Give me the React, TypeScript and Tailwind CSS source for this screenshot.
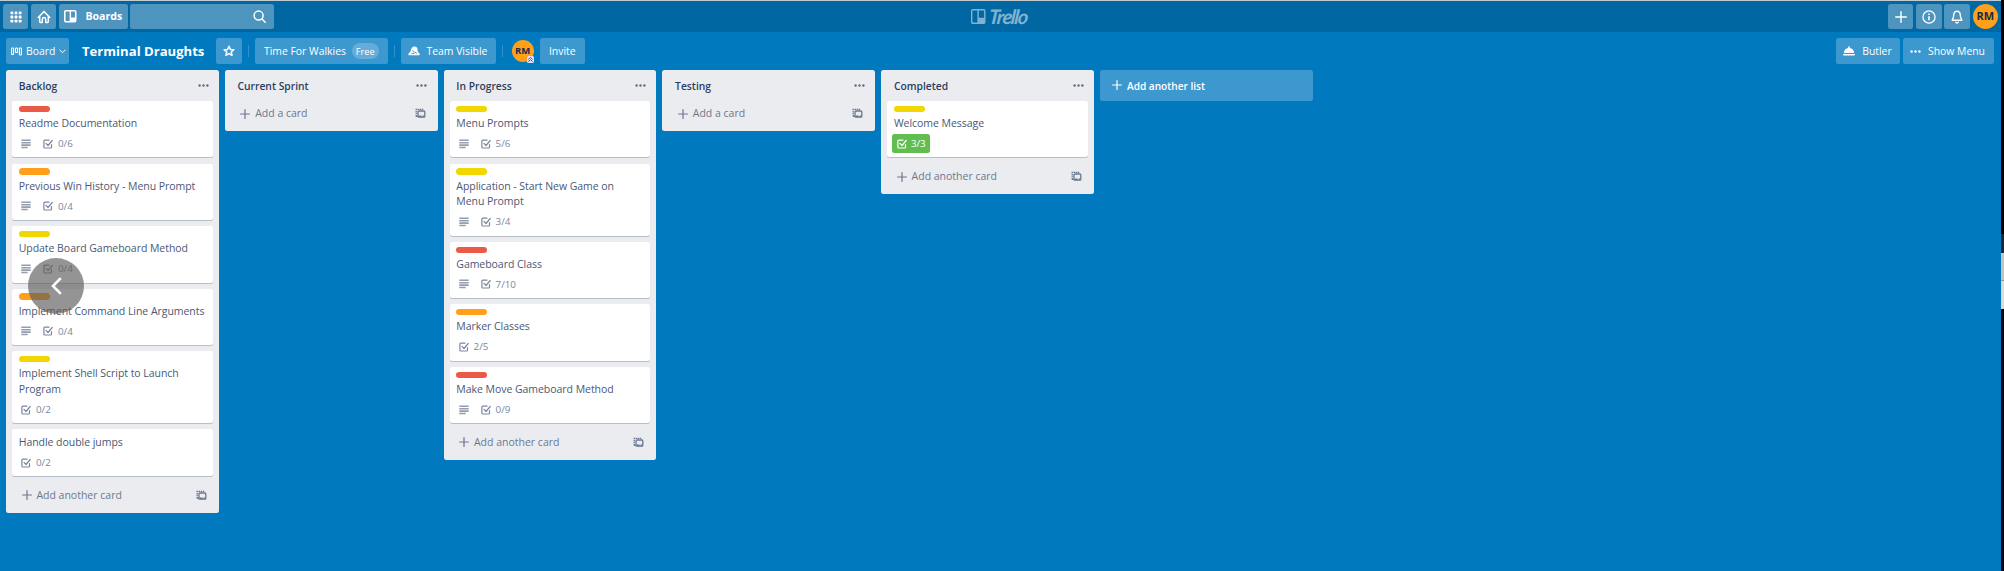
import type { ReactNode } from "react";

type Card = { title: string; label?: string; desc?: boolean; check: string; done?: boolean };
type List = { name: string; cards: Card[] };

const RED = "bg-[#eb5a46]";
const ORANGE = "bg-[#ff9f1a]";
const YELLOW = "bg-[#f2d600]";

const lists: List[] = [
  {
    name: "Backlog",
    cards: [
      { title: "Readme Documentation", label: RED, desc: true, check: "0/6" },
      { title: "Previous Win History - Menu Prompt", label: ORANGE, desc: true, check: "0/4" },
      { title: "Update Board Gameboard Method", label: YELLOW, desc: true, check: "0/4" },
      { title: "Implement Command Line Arguments", label: ORANGE, desc: true, check: "0/4" },
      { title: "Implement Shell Script to Launch Program", label: YELLOW, check: "0/2" },
      { title: "Handle double jumps", check: "0/2" },
    ],
  },
  { name: "Current Sprint", cards: [] },
  {
    name: "In Progress",
    cards: [
      { title: "Menu Prompts", label: YELLOW, desc: true, check: "5/6" },
      { title: "Application - Start New Game on Menu Prompt", label: YELLOW, desc: true, check: "3/4" },
      { title: "Gameboard Class", label: RED, desc: true, check: "7/10" },
      { title: "Marker Classes", label: ORANGE, check: "2/5" },
      { title: "Make Move Gameboard Method", label: RED, desc: true, check: "0/9" },
    ],
  },
  { name: "Testing", cards: [] },
  { name: "Completed", cards: [{ title: "Welcome Message", label: YELLOW, check: "3/3", done: true }] },
];

function Dots({ className }: { className: string }) {
  return (
    <svg className={className} viewBox="0 0 11 3" fill="currentColor">
      <circle cx="1.6" cy="1.5" r="1.2" />
      <circle cx="5.5" cy="1.5" r="1.2" />
      <circle cx="9.4" cy="1.5" r="1.2" />
    </svg>
  );
}

function Plus({ className }: { className: string }) {
  return (
    <svg className={className} viewBox="0 0 10 10" stroke="currentColor" strokeWidth="1.2" strokeLinecap="round">
      <path d="M5 .6v8.8M.6 5h8.8" />
    </svg>
  );
}

function CheckIcon() {
  return (
    <svg className="size-[10px] shrink-0" viewBox="0 0 10 10" fill="none" stroke="currentColor" strokeWidth="1.2" strokeLinecap="round" strokeLinejoin="round">
      <path d="M6 1.2H1.7a.8.8 0 0 0-.8.8v6.2c0 .4.4.8.8.8h6a.8.8 0 0 0 .8-.8V5.6" />
      <path d="M3 4.4l2 2.1 4.2-5" />
    </svg>
  );
}

function DescIcon() {
  return (
    <svg className="size-[10px] shrink-0" viewBox="0 0 10 10" stroke="currentColor" strokeWidth="1.6">
      <path d="M.3 1.3h9.4M.3 3.7h9.4M.3 6.1h9.4M.3 8.5h6.4" />
    </svg>
  );
}

function TemplateIcon() {
  return (
    <svg className="size-[11px]" viewBox="0 0 11 11" fill="none" stroke="currentColor" strokeWidth="1.3">
      <path d="M1.200 8.400V1.300h7.200" strokeDasharray="1.500 .6" />
      <path d="M1 8.400h1.800" />
      <rect x="3" y="3" width="6.800" height="6.200" rx=".9" />
      <path d="M3.600 8.400h3M7.600 8.400h1.800" strokeWidth="1.800" />
    </svg>
  );
}

function CardView({ card }: { card: Card }) {
  return (
    <div className="mb-[6.2px] rounded-[2.5px] bg-white px-[6.5px] pb-[6.25px] pt-[4.7px] shadow-[0_1px_0_rgba(9,30,66,0.22)]">
      {card.label && <div className={"mb-[3.2px] h-[6.3px] w-[31.2px] rounded-full " + card.label} />}
      <div className="mb-[4.5px] pt-[0.7px] text-[10.5px] leading-[15.65px] tracking-[-0.04px] text-[#4a5874]">{card.title}</div>
      <div className={"flex h-[15.1px] items-center text-[#7b879b] " + (card.done ? "-ml-[1.500px]" : "pl-[2.8px]")}>
        {card.desc && (
          <div className="mr-[12px] flex opacity-80">
            <DescIcon />
          </div>
        )}
        <div
          className={
            card.done
              ? "-my-[1.500px] flex h-[18.500px] items-center gap-[4px] rounded-[2.5px] bg-[#61bd4f] px-[4.500px] text-white"
              : "flex items-center gap-[4.500px]"
          }
        >
          <CheckIcon />
          <span className="text-[9.8px] leading-[15px]">{card.check}</span>
        </div>
      </div>
    </div>
  );
}

function ListView({ list }: { list: List }) {
  return (
    <section className="w-[212.8px] shrink-0 rounded-[2.5px] bg-[#ebecf0] px-[6.2px]">
      <header className="flex h-[31.6px] items-center justify-between pl-[6.5px] pr-[4px]">
        <h2 className="pt-[0.500px] text-[10.3px] font-semibold leading-[16px] text-[#2c3e5d]">{list.name}</h2>
        <Dots className="h-[3px] w-[11px] text-[#5e6c84]" />
      </header>
      {list.cards.map((c) => (
        <CardView key={c.title} card={c} />
      ))}
      <div className="mb-[5.2px] flex h-[25px] items-center pl-[9.4px] pr-[5.8px] pt-[0.8px] text-[#6b778f]">
        <Plus className="size-[10px]" />
        <span className="ml-[4.8px] flex-1 text-[10.5px]">{list.cards.length ? "Add another card" : "Add a card"}</span>
        <TemplateIcon />
      </div>
    </section>
  );
}

function TopButton({ className = "w-[25.2px]", children }: { className?: string; children: ReactNode }) {
  return (
    <div className={"flex h-[25px] shrink-0 items-center justify-center rounded-[2.5px] bg-[#4d94bf] text-white " + className}>{children}</div>
  );
}

function BoardButton({ className, children }: { className: string; children: ReactNode }) {
  return (
    <div className={"flex h-[25.4px] shrink-0 items-center rounded-[2.5px] bg-[#3d98d0] pt-[1px] text-[10.4px] font-medium text-white " + className}>{children}</div>
  );
}

const Divider = () => <div className="h-[12.5px] w-px shrink-0 bg-[#3391ca]" />;

export default function App() {
  return (
    <div className="relative flex h-[571px] w-[2004px] overflow-hidden bg-[#0079bf] font-['Open_Sans','Noto_Sans',sans-serif]">
      <div className="flex min-w-0 flex-1 flex-col">
        <div className="h-px shrink-0 bg-[#c3ccd3]" />
        <nav className="flex h-[31px] shrink-0 items-center bg-[#0067a3] pl-[3px] pr-[2.500px]">
          <div className="flex w-[900px] items-center gap-[2.9px]">
            <TopButton>
              <svg className="size-[12px]" viewBox="0 0 12 12" fill="currentColor">
                {[0.5, 4.6, 8.7].map((y) => [0.5, 4.6, 8.7].map((x) => <rect key={x + "-" + y} x={x} y={y} width="2.8" height="2.8" rx=".6" />))}
              </svg>
            </TopButton>
            <TopButton>
              <svg className="size-[14px]" viewBox="0 0 14 14" fill="none" stroke="currentColor" strokeWidth="1.5" strokeLinecap="round" strokeLinejoin="round">
                <path d="M1.2 7.4L7 1.4l5.8 6M2.7 6.4v5.2c0 .5.3.8.8.8h1.8V9.2a1.7 1.7 0 0 1 3.4 0v3.2h1.8c.5 0 .8-.3.8-.8V6.4" />
              </svg>
            </TopButton>
            <TopButton className="w-[68.4px] gap-[8.500px]">
              <svg className="size-[12.5px]" viewBox="0 0 12 12">
                <rect x=".75" y=".75" width="10.5" height="10.5" rx="1" fill="none" stroke="currentColor" strokeWidth="1.5" />
                <path d="M5.4 1h1.400v10H5.400z" fill="currentColor" />
                <path d="M6.4 7.2h4.8v4H6.4z" fill="currentColor" />
              </svg>
              <span className="text-[10.6px] font-bold">Boards</span>
            </TopButton>
            <TopButton className="w-[144px] pl-[115px]">
              <svg className="size-[13px]" viewBox="0 0 13 13" fill="none" stroke="currentColor" strokeWidth="1.5" strokeLinecap="round">
                <circle cx="5.6" cy="5.6" r="4.5" />
                <path d="M9 9l3.2 3.2" />
              </svg>
            </TopButton>
          </div>
          <div className="ml-[68px] flex items-center gap-[3px] text-[#80b3d2]">
            <svg className="h-[15px] w-[14.5px]" viewBox="0 0 14.5 15">
              <rect x=".7" y=".7" width="13.1" height="13.6" rx="1" fill="none" stroke="currentColor" strokeWidth="1.4" />
              <path d="M6.4 1h1.4v7.800h6v5.5H6.4z" fill="currentColor" />
            </svg>
            <span className="-skew-x-6 pb-[1px] font-['Lato',sans-serif] text-[20px] font-bold italic leading-[20px] tracking-[-1.300px]">Trello</span>
          </div>
          <div className="ml-auto flex items-center gap-[2.9px]">
            <TopButton>
              <Plus className="size-[12px]" />
            </TopButton>
            <TopButton>
              <svg className="size-[14px]" viewBox="0 0 14 14" fill="none" stroke="currentColor" strokeWidth="1.3">
                <circle cx="7" cy="7" r="6.1" />
                <path d="M7 6.2v4M7 3.6v1.4" strokeWidth="1.6" />
              </svg>
            </TopButton>
            <TopButton>
              <svg className="h-[14px] w-[12px]" viewBox="0 0 12 14" fill="none" stroke="currentColor" strokeWidth="1.4" strokeLinejoin="round" strokeLinecap="round">
                <path d="M6 1.2c-2 0-3.2 1.5-3.2 3.4 0 2.7-.5 3.6-1.6 5.6h9.6c-1.1-2-1.6-2.9-1.6-5.6C9.200 2.700 8 1.200 6 1.200z" />
                <path d="M4.800 12.200c.5 1 1.900 1 2.400 0" />
              </svg>
            </TopButton>
            <div className="flex size-[25.500px] items-center justify-center rounded-full bg-[#ff9f1a] text-[11px] font-bold text-[#172b4d]">RM</div>
          </div>
        </nav>

        <div className="flex h-[37.500px] shrink-0 items-center pl-[6px] pr-[6.500px] pt-[0.500px]">
          <BoardButton className="w-[63px] pl-[5px]">
            <svg className="h-[9px] w-[11px]" viewBox="0 0 11 9" fill="none" stroke="currentColor" strokeWidth="1.100">
              <rect x=".6" y="1" width="2" height="6.500" rx=".6" />
              <rect x="4.500" y="1" width="2" height="4.500" rx=".6" />
              <rect x="8.400" y="1" width="2" height="7" rx=".6" />
            </svg>
            <span className="ml-[4px]">Board</span>
            <svg className="ml-[3.500px] h-[5px] w-[7px]" viewBox="0 0 7 5" fill="none" stroke="currentColor" strokeLinecap="round">
              <path d="M.8 1l2.700 2.700L6.200 1" />
            </svg>
          </BoardButton>
          <h1 className="ml-[13px] w-[134px] whitespace-nowrap pt-[1px] text-[13.100px] font-bold text-white">Terminal Draughts</h1>
          <BoardButton className="w-[25.500px] justify-center">
            <svg className="size-[12px]" viewBox="0 0 12 12" fill="none" stroke="currentColor" strokeWidth="1.500" strokeLinejoin="round">
              <path d="M6 1.200l1.400 3.200 3.500.3-2.650 2.300.8 3.400L6 8.600l-3.050 1.800.8-3.400L1.100 4.700l3.500-.3z" />
            </svg>
          </BoardButton>
          <div className="flex w-[13.500px] justify-center">
            <Divider />
          </div>
          <BoardButton className="w-[132.500px] pl-[9px]">
            <span className="w-[82px] whitespace-nowrap">Time For Walkies</span>
            <span className="ml-[6px] flex h-[16px] w-[26.500px] items-center justify-center rounded-full bg-[#64acd9] text-[9.200px]">Free</span>
          </BoardButton>
          <div className="flex w-[13.500px] justify-center">
            <Divider />
          </div>
          <BoardButton className="w-[94.500px] pl-[7px]">
            <svg className="h-[10px] w-[12px]" viewBox="0 0 12 10">
              <path d="M2.600 5C3.200 2.400 4.200.4 6.600.4c2.200 0 2.900 1.400 2.900 3 0 1.700.3 2.700 2 4 .5.500.3 1.700-.3 1.800H.8c-.6-.3-.5-1.500 0-2C1.700 6.700 2.300 6.200 2.600 5z" fill="currentColor" />
              <path d="M4.600 4.400c.2 2.200 3.200 1.400 4.600 3.200M3.400 7.600h3" stroke="#3d98d0" fill="none" />
            </svg>
            <span className="ml-[6.500px]">Team Visible</span>
          </BoardButton>
          <div className="flex w-[13.500px] justify-center">
            <Divider />
          </div>
          <div className="relative ml-[2.500px] flex size-[22px] items-center justify-center rounded-full bg-[#ff9f1a] text-[9.500px] font-bold text-[#172b4d]">
            RM
            <svg className="absolute -bottom-px right-0 size-[7px]" viewBox="0 0 7 7" fill="none">
              <rect width="7" height="7" rx="1.500" fill="#dfe3f5" />
              <path d="M1.300 3.400l2.200-1.900 2.200 1.900M1.300 5.600l2.200-1.900 2.200 1.900" stroke="#4a4fc0" />
            </svg>
          </div>
          <BoardButton className="ml-[6px] w-[45.500px] justify-center">Invite</BoardButton>
          <BoardButton className="ml-auto w-[63.500px] pl-[7px]">
            <svg className="h-[10px] w-[12px]" viewBox="0 0 12 10" fill="currentColor">
              <path d="M.8 7C1 4 3 2.200 5.200 1.900V1c0-1 1.600-1 1.600 0v.9C9 2.200 11 4 11.200 7z" />
              <rect x="0" y="7.900" width="12" height="1.700" rx=".8" />
            </svg>
            <span className="ml-[7px]">Butler</span>
          </BoardButton>
          <BoardButton className="ml-[3.300px] w-[91px] pl-[7px]">
            <Dots className="h-[3px] w-[11px]" />
            <span className="ml-[7px]">Show Menu</span>
          </BoardButton>
        </div>

        <main className="flex items-start gap-[6px] pl-[6px]">
          {lists.map((l) => (
            <ListView key={l.name} list={l} />
          ))}
          <div className="flex h-[31.300px] w-[212.800px] items-center rounded-[2.500px] bg-[#3d98d0] pl-[12.500px] text-white">
            <Plus className="size-[10px]" />
            <span className="ml-[4.500px] pt-[1px] text-[10.100px] font-semibold leading-[16px]">Add another list</span>
          </div>
        </main>
      </div>

      <div className="flex w-[3.500px] shrink-0 flex-col bg-black">
        <div className="h-[234px]" />
        <div className="h-[19px] bg-[#14293d]" />
        <div className="h-[27px] bg-[#c4c4c4]" />
        <div className="h-[29px] border-t border-[#999] bg-[#dcd9dc]" />
        <div className="flex-1 bg-[#020a16]" />
      </div>

      <div className="absolute left-[28px] top-[258px] flex size-[56px] items-center justify-center rounded-full bg-[#5a5a5a]/65">
        <svg className="h-[18px] w-[11px]" viewBox="0 0 11 18" fill="none" stroke="white" strokeWidth="2.600">
          <path d="M9.800 1.200L2 9l7.800 7.800" />
        </svg>
      </div>
    </div>
  );
}
